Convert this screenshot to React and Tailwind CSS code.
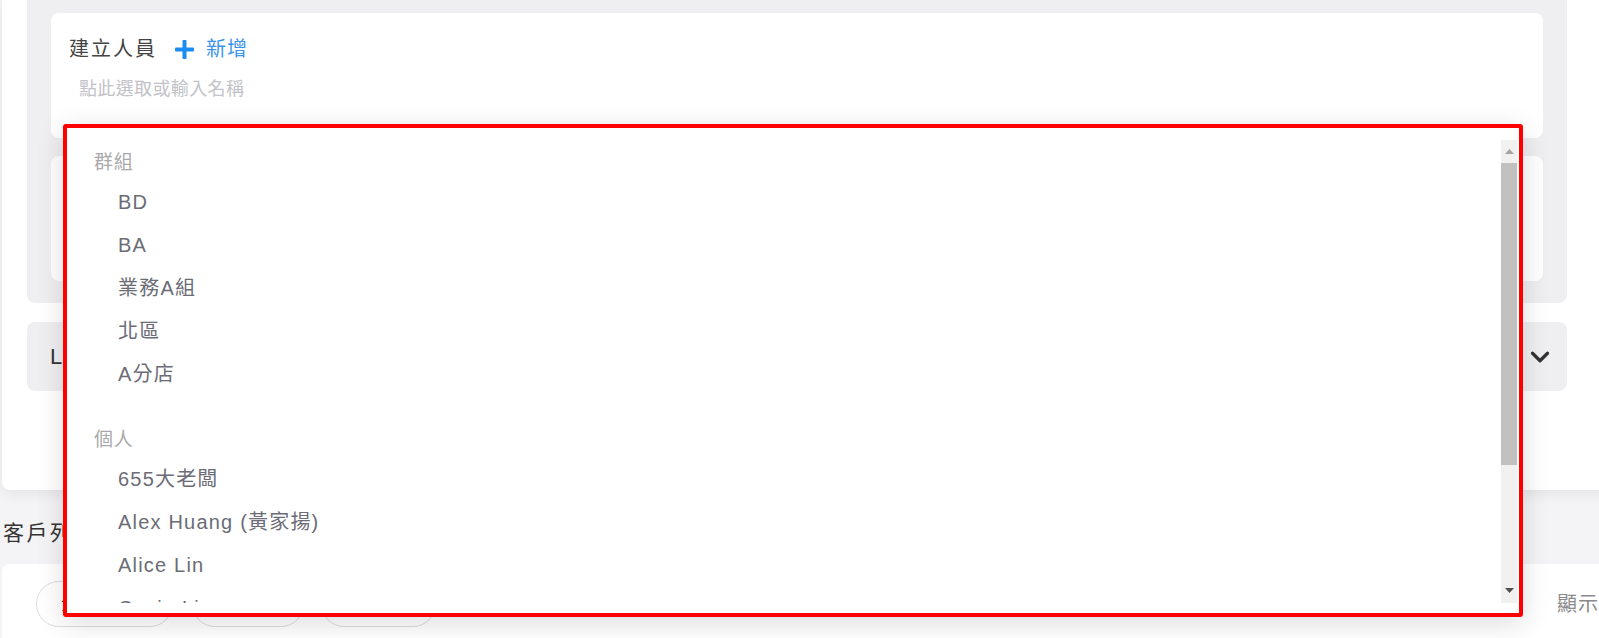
import { ChevronDown } from "lucide-react";

const FONT = "font-['Liberation_Sans','Noto_Sans_CJK_TC',sans-serif]";

const GROUPS = [
  { title: "群組", items: ["BD", "BA", "業務A組", "北區", "A分店"] },
  { title: "個人", items: ["655大老闆", "Alex Huang (黃家揚)", "Alice Lin", "Cecia Lin", "David Chen"] },
];

function PlusIcon() {
  return (
    <svg width="19" height="19" viewBox="0 0 19 19" className="shrink-0">
      <rect x="7.5" y="0" width="4" height="19" rx="1" fill="#1b8cf2" />
      <rect x="0" y="7.5" width="19" height="4" rx="1" fill="#1b8cf2" />
    </svg>
  );
}

function Scrollbar() {
  return (
    <div className="w-4 shrink-0 bg-[#f1f1f1] flex flex-col">
      <div className="h-[23px] flex items-center justify-center">
        <svg width="9" height="5" viewBox="0 0 9 5">
          <polygon points="0,5 4.5,0 9,5" fill="#a3a3a3" />
        </svg>
      </div>
      <div className="h-[302px] bg-[#c1c1c1]" />
      <div className="flex-1" />
      <div className="h-[26px] flex items-center justify-center">
        <svg width="9" height="5" viewBox="0 0 9 5">
          <polygon points="0,0 9,0 4.5,5" fill="#505050" />
        </svg>
      </div>
    </div>
  );
}

function Dropdown() {
  return (
    <div className="absolute left-[63px] top-[124px] w-[1460px] h-[493px] border-4 border-[#ff0000] rounded-[3px] bg-white shadow-[0_6px_28px_rgba(0,0,0,0.14)] pt-[12px] pb-[10px] pr-[2px] flex">
      <div className="flex-1 overflow-hidden pt-[6px]">
        {GROUPS.map((g, gi) => (
          <div key={g.title} className={gi > 0 ? "mt-[28px]" : ""}>
            <div className="h-[34px] flex items-center pl-[27px] text-[19px] tracking-[0.04em] text-[#a9a9ab]">
              {g.title}
            </div>
            {g.items.map((it) => (
              <div
                key={it}
                className="h-[43px] flex items-center pl-[51px] text-[20px] tracking-[0.06em] text-[#6b6c76] whitespace-nowrap"
              >
                {it}
              </div>
            ))}
          </div>
        ))}
      </div>
      <Scrollbar />
    </div>
  );
}

export default function App() {
  return (
    <div className={`relative h-[638px] overflow-hidden bg-[#f4f4f6] ${FONT}`}>
      {/* filter card */}
      <div className="ml-[2px] w-[1620px] bg-white rounded-bl-lg shadow-[0_4px_14px_rgba(0,0,0,0.07)] pl-[25px] pb-[99px]">
        <div className="w-[1540px] bg-[#efeff1] rounded-b-lg pt-[13px] px-[24px] pb-[22px]">
          <div className="h-[125px] bg-white rounded-lg pl-[18px] pt-[22px]">
            <div className="flex items-center h-[28px]">
              <span className="text-[20px] tracking-[0.1em] text-[#444]">建立人員</span>
              <span className="ml-[18px]">
                <PlusIcon />
              </span>
              <span className="ml-[12px] text-[20px] tracking-[0.05em] text-[#3a94ec]">新增</span>
            </div>
            <div className="mt-[14px] pl-[10px] h-[24px] flex items-center text-[18px] tracking-[0.02em] text-[#c2c2c8]">
              點此選取或輸入名稱
            </div>
          </div>
          <div className="mt-[18px] h-[125px] bg-white rounded-lg" />
        </div>
        <div className="mt-[19px] w-[1540px] h-[69px] bg-[#efeff1] rounded-lg flex items-center justify-between pl-[23px] pr-[12px]">
          <span className="text-[22px] tracking-[0.08em] text-[#333]">LINE好友狀態</span>
          <ChevronDown size={30} strokeWidth={2.6} className="text-[#333]" />
        </div>
      </div>

      {/* customer list */}
      <div className="mt-[28px] ml-[3px] h-[30px] flex items-center text-[21px] tracking-[0.12em] text-[#333]">
        客戶列表
      </div>
      <div className="mt-[16px] ml-[2px] w-[1720px] h-[120px] bg-white rounded-tl-lg pt-[17px] pl-[34px] flex items-start">
        <div className="shrink-0 h-[46px] w-[137px] rounded-full border border-[#dcdcdf] flex items-center pl-[24px] text-[18px] text-[#333] whitespace-nowrap">
          全部客戶
        </div>
        <div className="shrink-0 ml-[19px] h-[46px] w-[112px] rounded-full border border-[#dcdcdf] flex items-center justify-center text-[18px] text-[#333] whitespace-nowrap">
          已分配
        </div>
        <div className="shrink-0 ml-[17px] h-[46px] w-[115px] rounded-full border border-[#dcdcdf] flex items-center justify-center text-[18px] text-[#333] whitespace-nowrap">
          未分配
        </div>
        <div className="shrink-0 ml-[1121px] h-[46px] flex items-center text-[20px] tracking-[0.05em] text-[#8a8a8c] whitespace-nowrap">
          顯示筆數
        </div>
      </div>

      <Dropdown />
    </div>
  );
}
